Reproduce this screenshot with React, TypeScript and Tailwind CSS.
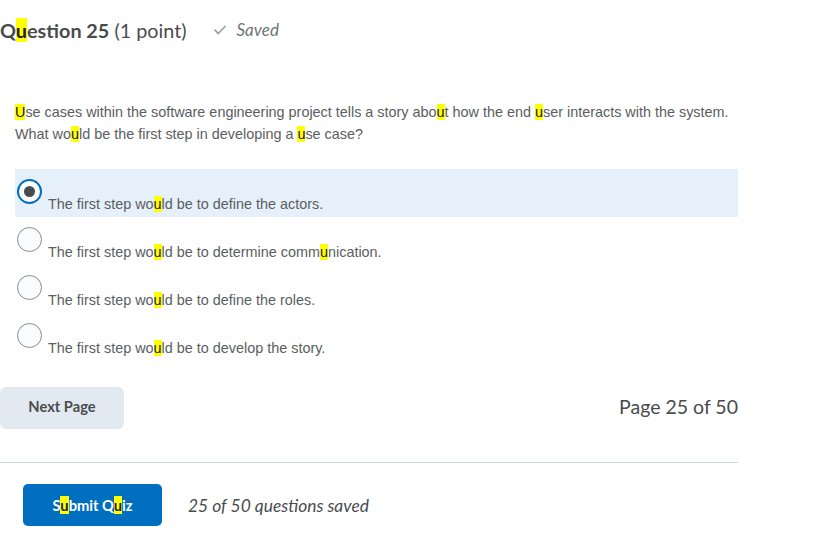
import { Fragment } from "react";

const options = [
  ["The first step wo", "u", "ld be to define the actors."],
  ["The first step wo", "u", "ld be to determine comm", "u", "nication."],
  ["The first step wo", "u", "ld be to define the roles."],
  ["The first step wo", "u", "ld be to develop the story."],
];

function Mark({ children }: { children: string }) {
  return <span className="bg-[#ffff00] text-[#202122]">{children}</span>;
}

// alternating plain / highlighted pieces
function Highlighted({ parts }: { parts: string[] }) {
  return (
    <>
      {parts.map((part, i) => (
        <Fragment key={i}>{i % 2 === 1 ? <Mark>{part}</Mark> : part}</Fragment>
      ))}
    </>
  );
}

function Radio({ checked }: { checked: boolean }) {
  if (checked) {
    return (
      <span className="flex h-[25px] w-[25px] items-center justify-center rounded-full border-2 border-[#006fbf] bg-white">
        <span className="h-[11px] w-[11px] rounded-full bg-[#494c4e]" />
      </span>
    );
  }
  return <span className="block h-[25px] w-[25px] rounded-full border border-[#868c91] bg-[#f9fbff]" />;
}

export default function App() {
  return (
    <main className="w-[738px] bg-white text-[#494c4e]">
      <header className="flex h-[60px] items-center font-['Lato',sans-serif]">
        <h2 className="text-[19.8px] leading-[24px]">
          <span className="font-bold">
            Q<Mark>u</Mark>estion 25
          </span>{" "}
          <span>(1 point)</span>
        </h2>
        <span className="ml-[27px] flex items-center gap-[11px] text-[17px] italic text-[#6e7477]">
          <svg width="12" height="10" viewBox="0 0 12 10" fill="none">
            <path d="M1 5.2 4.3 8.5 11 1.5" stroke="#9ea5aa" strokeWidth="1.8" strokeLinecap="round" strokeLinejoin="round" />
          </svg>
          Saved
        </span>
      </header>

      <div className="font-['Liberation_Sans',Arial,sans-serif] text-[14.4px] text-[#5a5e60]">
        <p className="mt-[41px] pl-[15px] leading-[22px]">
          <Highlighted
            parts={[
              "",
              "U",
              "se cases within the software engineering project tells a story abo",
              "u",
              "t how the end ",
              "u",
              "ser interacts with the system.",
            ]}
          />
          <br />
          <Highlighted parts={["What wo", "u", "ld be the first step in developing a ", "u", "se case?"]} />
        </p>

        <ul className="mt-[24px] ml-[15px]">
          {options.map((parts, i) => (
            <li key={i} className={`flex h-[48px] gap-[6px] pl-[2px] ${i === 0 ? "bg-[#e6f0fa]" : ""}`}>
              <span className="mt-[10px] shrink-0">
                <Radio checked={i === 0} />
              </span>
              <span className="mt-[27px] leading-[17px]">
                <Highlighted parts={parts} />
              </span>
            </li>
          ))}
        </ul>
      </div>

      <div className="mt-[26px] flex items-center justify-between font-['Lato',sans-serif]">
        <button className="h-[42px] w-[124px] rounded-[6px] bg-[#e3e9f1] pb-[3px] text-[14.7px] font-bold text-[#494c4e]">
          Next Page
        </button>
        <span className="pb-[3px] text-[19.5px]">Page 25 of 50</span>
      </div>

      <div className="mt-[33px] border-t border-[#cdd5dc]" />

      <div className="mt-[21px] flex items-center gap-[26px] pl-[23px] font-['Lato',sans-serif]">
        <button className="h-[42px] w-[139px] rounded-[5px] bg-[#006fbf] text-[14.7px] font-bold text-white">
          S<Mark>u</Mark>bmit Q<Mark>u</Mark>iz
        </button>
        <span className="pt-[3px] text-[17.4px] italic">25 of 50 questions saved</span>
      </div>
    </main>
  );
}
